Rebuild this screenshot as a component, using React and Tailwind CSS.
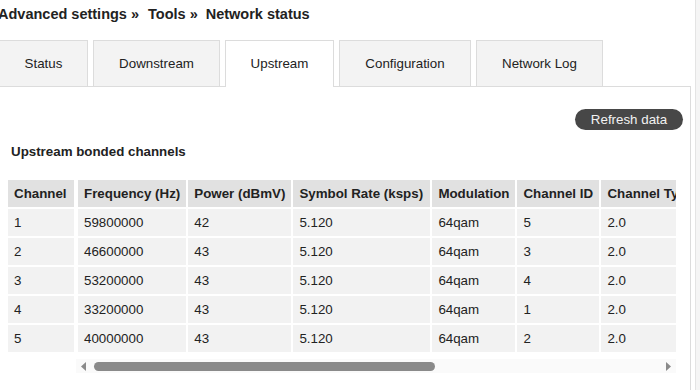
const rows = [
  { ch: "1", freq: "59800000", power: "42", rate: "5.120", mod: "64qam", id: "5", type: "2.0" },
  { ch: "2", freq: "46600000", power: "43", rate: "5.120", mod: "64qam", id: "3", type: "2.0" },
  { ch: "3", freq: "53200000", power: "43", rate: "5.120", mod: "64qam", id: "4", type: "2.0" },
  { ch: "4", freq: "33200000", power: "43", rate: "5.120", mod: "64qam", id: "1", type: "2.0" },
  { ch: "5", freq: "40000000", power: "43", rate: "5.120", mod: "64qam", id: "2", type: "2.0" },
];

const tabs = [
  { label: "Status", w: "w-[89px]" },
  { label: "Downstream", w: "w-[127px]" },
  { label: "Upstream", w: "w-[109px]", active: true },
  { label: "Configuration", w: "w-[132px]" },
  { label: "Network Log", w: "w-[127px]" },
];

function Tab({ label, w, active }) {
  return (
    <div
      className={
        active
          ? `${w} h-[47px] -mb-px flex items-center justify-center border border-b-0 border-[#dcdcdc] bg-white pb-px`
          : `${w} h-[46px] flex items-center justify-center border border-b-0 border-[#dcdcdc] bg-[#f3f3f3]`
      }
    >
      {label}
    </div>
  );
}

export default function App() {
  return (
    <div className="w-[700px] h-[390px] overflow-hidden bg-white flex font-['Liberation_Sans',Arial,sans-serif] text-[13.33px] text-[#222]">
      <div className="flex-1 min-w-0 -ml-px flex flex-col">
        {/* Breadcrumb */}
        <div className="h-[40px] pt-[5px] -ml-px text-[14.5px] leading-[19px] font-bold whitespace-nowrap">
          <span>Advanced settings »</span>
          <span className="ml-[9px]">Tools »</span>
          <span className="ml-[8px]">Network status</span>
        </div>

        {/* Tabs */}
        <div className="flex items-end gap-[5px] relative z-10">
          {tabs.map((t) => (
            <Tab key={t.label} {...t} />
          ))}
        </div>

        {/* Panel */}
        <div className="flex-1 mr-[4px] border border-[#dcdcdc] border-b-0">
          <div className="flex justify-end pt-[22px] pr-[7px]">
            <button className="h-[21px] w-[108px] rounded-full bg-[#474747] text-[#f2f2f2] leading-[21px]">
              Refresh data
            </button>
          </div>

          <h2 className="mt-[14px] ml-[11px] font-bold leading-[16px]">Upstream bonded channels</h2>

          <div className="mt-[18px] ml-[6px] flex items-start">
            {/* Fixed first column */}
            <table className="border-separate border-spacing-[2px] whitespace-nowrap">
              <thead>
                <tr className="h-[27px]">
                  <th className="w-[66px] bg-[#e1e1e1] px-[6px] text-left font-bold">Channel</th>
                </tr>
              </thead>
              <tbody>
                {rows.map((r) => (
                  <tr key={r.ch} className="h-[27px]">
                    <td className="bg-[#f2f2f2] px-[6px]">{r.ch}</td>
                  </tr>
                ))}
              </tbody>
            </table>

            {/* Scrolling columns */}
            <div className="w-[600px] flex flex-col">
              <div className="overflow-hidden">
                <table className="border-separate border-spacing-[2px] whitespace-nowrap">
                  <thead>
                    <tr className="h-[27px] text-left">
                      <th className="min-w-[108px] bg-[#e1e1e1] px-[6px] font-bold">Frequency (Hz)</th>
                      <th className="min-w-[103px] bg-[#e1e1e1] px-[6px] font-bold">Power (dBmV)</th>
                      <th className="min-w-[137px] bg-[#e1e1e1] px-[6px] font-bold">Symbol Rate (ksps)</th>
                      <th className="min-w-[83px] bg-[#e1e1e1] px-[6px] font-bold">Modulation</th>
                      <th className="min-w-[82px] bg-[#e1e1e1] px-[6px] font-bold">Channel ID</th>
                      <th className="min-w-[98px] bg-[#e1e1e1] px-[6px] font-bold">Channel Type</th>
                    </tr>
                  </thead>
                  <tbody>
                    {rows.map((r) => (
                      <tr key={r.ch} className="h-[27px]">
                        <td className="bg-[#f2f2f2] px-[6px]">{r.freq}</td>
                        <td className="bg-[#f2f2f2] px-[6px]">{r.power}</td>
                        <td className="bg-[#f2f2f2] px-[6px]">{r.rate}</td>
                        <td className="bg-[#f2f2f2] px-[6px]">{r.mod}</td>
                        <td className="bg-[#f2f2f2] px-[6px]">{r.id}</td>
                        <td className="bg-[#f2f2f2] px-[6px]">{r.type}</td>
                      </tr>
                    ))}
                  </tbody>
                </table>
              </div>

              {/* Horizontal scrollbar */}
              <div className="mt-[5px] h-[14px] bg-[#fafafa] flex items-center px-[5px]">
                <svg width="5" height="9" viewBox="0 0 5 9" className="shrink-0">
                  <path d="M5 0 L0 4.5 L5 9 Z" fill="#8a8a8a" />
                </svg>
                <div className="ml-[8px] w-[341px] h-[9px] rounded-full bg-[#8a8a8a]" />
                <div className="flex-1" />
                <svg width="5" height="9" viewBox="0 0 5 9" className="shrink-0">
                  <path d="M0 0 L5 4.5 L0 9 Z" fill="#8a8a8a" />
                </svg>
              </div>
            </div>
          </div>
        </div>
      </div>

      {/* Right edge strip */}
      <div className="w-[5px] border-l border-[#e4e4e4] bg-[#f5f5f5]" />
    </div>
  );
}
